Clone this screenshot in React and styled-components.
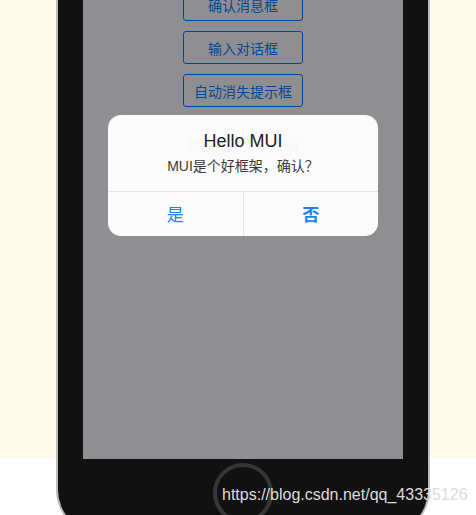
import React from 'react';
import styled, { createGlobalStyle } from 'styled-components';

const GlobalStyle = createGlobalStyle`
  html, body {
    margin: 0;
    padding: 0;
  }
  body {
    background: linear-gradient(#fffaea 0, #fffaea 458px, #ffffff 458px);
    font-family: "Liberation Sans", "Noto Sans CJK SC", sans-serif;
  }
`;

const Page = styled.div`
  position: relative;
  width: 476px;
  height: 515px;
  overflow: hidden;
`;

const Phone = styled.div`
  box-sizing: border-box;
  width: 374px;
  margin: -199px 0 0 56px;
  padding: 90px 25px 0;
  background: #111111;
  border: 2px solid #bdbdbd;
  border-top: none;
  border-radius: 0 0 45px 45px;
`;

const Screen = styled.div`
  position: relative;
  width: 320px;
  height: 568px;
  background: #efeff4;
  overflow: hidden;
`;

const Header = styled.div`
  height: 44px;
  background: #f7f7f7;
  display: flex;
  align-items: center;
  justify-content: center;
  font-size: 17px;
  color: #000;
`;

const Content = styled.div`
  padding-top: 10px;
  display: flex;
  flex-direction: column;
  align-items: center;
`;

const Button = styled.button`
  box-sizing: border-box;
  width: 120px;
  height: 33px;
  margin-bottom: 10px;
  padding: 0;
  border: 1px solid #007aff;
  border-radius: 3px;
  background: transparent;
  color: #007aff;
  font-family: "Liberation Sans", "Noto Sans CJK SC", sans-serif;
  font-size: 14px;
`;

const Info = styled.div`
  margin-top: 18px;
  font-size: 14px;
  line-height: 20px;
  color: #444;
`;

const Backdrop = styled.div`
  position: absolute;
  inset: 0;
  background: rgba(0, 0, 0, 0.4);
  display: flex;
  align-items: center;
  justify-content: center;
`;

const Popup = styled.div`
  width: 270px;
  border-radius: 13px;
  background: rgba(255, 255, 255, 0.96);
  overflow: hidden;
`;

const PopupInner = styled.div`
  padding: 15px;
  text-align: center;
  border-bottom: 1px solid #e3e3e5;
`;

const PopupTitle = styled.div`
  font-size: 18px;
  line-height: 22px;
  color: #1e1e1e;
`;

const PopupText = styled.div`
  margin-top: 4px;
  font-size: 14px;
  line-height: 20px;
  color: #3a3a3a;
`;

const PopupButtons = styled.div`
  display: flex;
  height: 44px;
`;

const PopupButton = styled.span`
  flex: 1;
  display: flex;
  align-items: center;
  justify-content: center;
  font-size: 17px;
  color: #1a82f0;
  font-weight: ${(p) => (p.$bold ? 700 : 400)};
  & + & {
    border-left: 1px solid #e3e3e5;
  }
`;

const HomeArea = styled.div`
  height: 74px;
  padding-top: 4px;
  box-sizing: border-box;
  display: flex;
  justify-content: center;
`;

const HomeButton = styled.div`
  box-sizing: border-box;
  width: 60px;
  height: 60px;
  border: 4px solid #363636;
  border-radius: 50%;
`;

const Watermark = styled.div`
  position: absolute;
  left: 222px;
  top: 487px;
  font-family: "Liberation Sans", sans-serif;
  font-size: 16px;
  line-height: 16px;
  color: #dcdcdc;
  white-space: nowrap;
`;

const buttons = ['警告消息框', '确认消息框', '输入对话框', '自动消失提示框'];

export default function App() {
  return (
    <>
      <GlobalStyle />
      <Page>
        <Phone>
          <Screen>
            <Header>dialog（对话框）</Header>
            <Content>
              {buttons.map((b) => (
                <Button key={b}>{b}</Button>
              ))}
              <Info>你点击了确认按钮</Info>
            </Content>
            <Backdrop>
              <Popup>
                <PopupInner>
                  <PopupTitle>Hello MUI</PopupTitle>
                  <PopupText>MUI是个好框架，确认？</PopupText>
                </PopupInner>
                <PopupButtons>
                  <PopupButton>是</PopupButton>
                  <PopupButton $bold>否</PopupButton>
                </PopupButtons>
              </Popup>
            </Backdrop>
          </Screen>
          <HomeArea>
            <HomeButton />
          </HomeArea>
        </Phone>
        <Watermark>https://blog.csdn.net/qq_43335126</Watermark>
      </Page>
    </>
  );
}
